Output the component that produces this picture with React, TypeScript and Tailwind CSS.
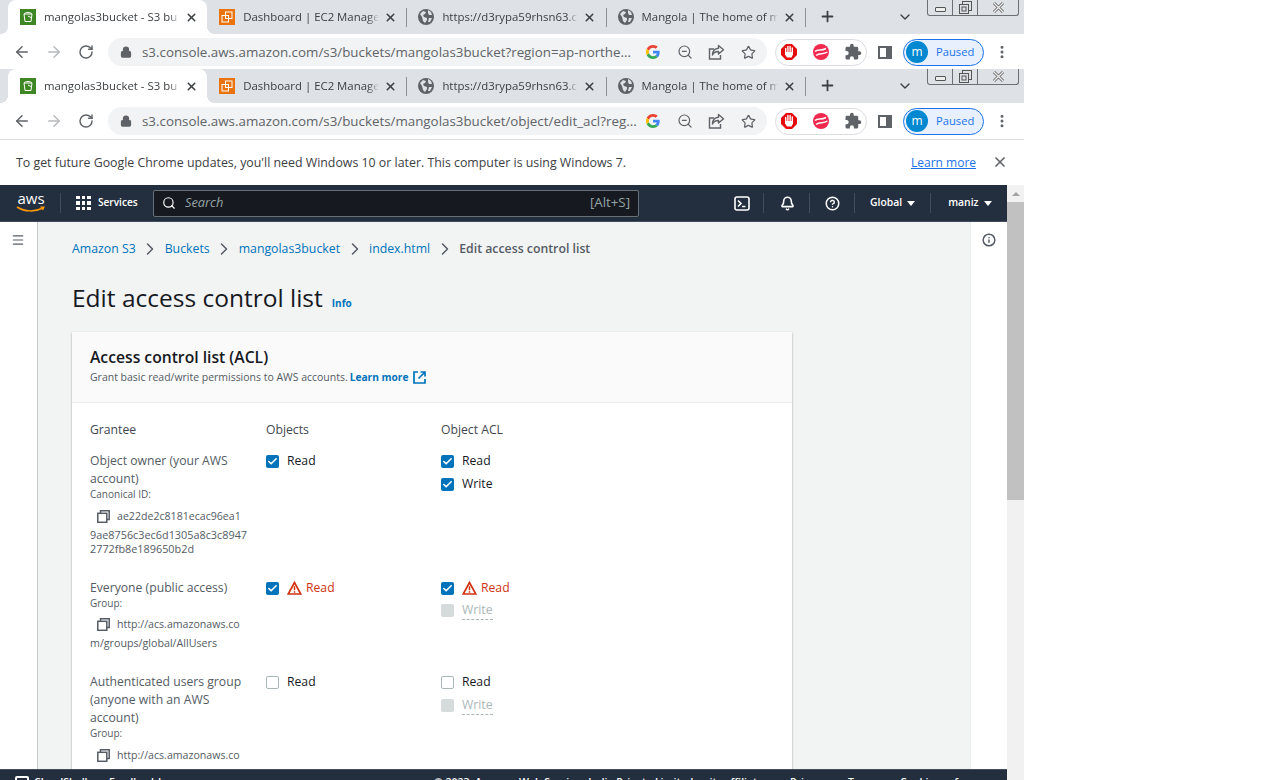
import React from "react";
import { MdExtension } from "react-icons/md";
import { ArrowLeft, ArrowRight, RotateCw, Lock, Star, MoreVertical, X, Plus, ChevronDown, ChevronRight, Menu, Info, Check, Bell, CircleHelp, Search, ZoomOut } from "lucide-react";

const Globe = () => (
  <svg width="16" height="16" viewBox="0 0 16 16" className="shrink-0">
    <circle cx="8" cy="8" r="8" fill="#5f6368" />
    <path d="M2 5l3-3 3 1-1 2-2 1 1 2 3 1 0 2-2 3-2-2-1-4zM10 1l3 2 1 3-3 0-1-2zM11 9l3 0-2 4-2 0z" fill="#dee1e6" />
  </svg>
);
const S3Icon = () => (
  <svg width="16" height="16" viewBox="0 0 16 16" className="shrink-0">
    <rect width="16" height="16" fill="#3f8624" />
    <path d="M4 5h8l-1 7.500H5zM4 5c1-2 7-2 8 0" fill="none" stroke="#fff" strokeWidth="1" />
    <path d="M8 7l4 2" stroke="#fff" strokeWidth="1" />
  </svg>
);
const Ec2Icon = () => (
  <svg width="16" height="16" viewBox="0 0 16 16" className="shrink-0">
    <rect width="16" height="16" fill="#e8730f" />
    <rect x="6.500" y="3" width="6.500" height="6.500" fill="none" stroke="#fff" strokeWidth="1" />
    <rect x="3" y="6.500" width="6.500" height="6.500" fill="none" stroke="#fff" strokeWidth="1" />
  </svg>
);
const GoogleG = () => (
  <svg width="14" height="14" viewBox="0 0 48 48" className="shrink-0">
    <path fill="#EA4335" d="M24 9.500c3.500 0 6.700 1.200 9.200 3.600l6.900-6.900C35.900 2.400 30.500 0 24 0 14.600 0 6.500 5.400 2.600 13.200l8 6.200C12.400 13.700 17.700 9.500 24 9.500z" />
    <path fill="#4285F4" d="M46.900 24.500c0-1.600-.1-3.100-.4-4.500H24v9h12.900c-.6 3-2.200 5.500-4.800 7.200l7.700 6c4.500-4.200 7.100-10.300 7.100-17.700z" />
    <path fill="#FBBC05" d="M10.500 28.600c-.5-1.400-.8-3-.8-4.600s.3-3.200.8-4.600l-8-6.200C.9 16.500 0 20.100 0 24s.9 7.500 2.600 10.800l7.900-6.200z" />
    <path fill="#34A853" d="M24 48c6.500 0 11.900-2.100 15.900-5.800l-7.700-6c-2.100 1.400-4.900 2.300-8.200 2.300-6.300 0-11.600-4.200-13.500-9.900l-8 6.200C6.500 42.600 14.600 48 24 48z" />
  </svg>
);
const Abp = () => (
  <svg width="16" height="16" viewBox="0 0 16 16" className="shrink-0">
    <path d="M5 0h6l5 5v6l-5 5H5l-5-5V5z" fill="#e40c0c" />
    <path d="M4.700 4.500v5M6.900 2.500v5M9.100 2.500v5M11.300 4v5" stroke="#fff" strokeWidth="1.400" strokeLinecap="round" />
    <path d="M4 8h8v2.500L10.500 13.500H6L4 10.500z" fill="#fff" />
  </svg>
);
const RedCircle = () => (
  <svg width="16" height="16" viewBox="0 0 16 16" className="shrink-0">
    <circle cx="8" cy="8" r="8" fill="#f0294f" />
    <path d="M2 7.500C5 4.500 8 7.500 13 4.500M3 11.500C7 8.500 10 11 14.500 8" fill="none" stroke="#fff" strokeWidth="1.500" />
  </svg>
);
const ShareIcon = () => (
  <svg width="17" height="16" viewBox="0 0 17 16" className="shrink-0" fill="none" stroke="#5f6368" strokeWidth="1.400">
    <path d="M6 5H1.500v10h11v-4" />
    <path d="M10.500 1.500l5 4.300-5 4.200V7.500C7.500 7.500 5.500 8.500 4.500 11c0-4 2.500-6.500 6-6.800z" strokeLinejoin="round" />
  </svg>
);
const CopyIcon = () => (
  <svg width="13" height="13" viewBox="0 0 13 13" className="shrink-0" fill="none" stroke="#545b64" strokeWidth="1.500">
    <path d="M3.500 3V0.800h8.700v8.700H10" />
    <rect x="0.800" y="3.300" width="9" height="9" />
  </svg>
);
const ExtIcon = () => (
  <svg width="13" height="13" viewBox="0 0 13 13" className="ml-[4px] shrink-0" fill="none" stroke="#0073bb" strokeWidth="1.700">
    <path d="M5 1H1v11h11V8M7.500 1H12v4.500M12 1L5.500 7.500" />
  </svg>
);
const WarnIcon = () => (
  <svg width="15" height="14" viewBox="0 0 15 14" className="ml-[8px] shrink-0" fill="none">
    <path d="M7.500 1.500L1.200 13h12.600z" stroke="#d13212" strokeWidth="1.700" strokeLinejoin="miter" />
    <path d="M7.500 5.200v4M7.500 10.200v1.600" stroke="#d13212" strokeWidth="1.500" />
  </svg>
);
const TermIcon = () => (
  <svg width="16" height="15" viewBox="0 0 16 15" className="ml-[95px] shrink-0" fill="none" stroke="#fff" strokeWidth="1.600">
    <rect x="1" y="1" width="14" height="13" rx="2" />
    <path d="M4 4.500l3 3-3 3M8 10.500h3.500" />
  </svg>
);
const AwsLogo = () => (
  <div className="relative w-[30px] h-[20px] shrink-0">
    <span className="absolute left-0 -top-[5px] w-full text-center text-white text-[15px] leading-[20px] [font-family:'Open_Sans',sans-serif]">aws</span>
    <svg width="30" height="8" viewBox="0 0 30 8" className="absolute left-0 top-[13px]">
      <path d="M1 1c8 5 18 5 26 1" fill="none" stroke="#ff9900" strokeWidth="1.500" />
      <path d="M24 0.500l5 0-2 4z" fill="#ff9900" />
    </svg>
  </div>
);

const TABS = [
  { title: "mangolas3bucket - S3 bu", icon: <S3Icon />, active: true },
  { title: "Dashboard | EC2 Manage", icon: <Ec2Icon /> },
  { title: "https://d3rypa59rhsn63.cl", icon: <Globe /> },
  { title: "Mangola | The home of m", icon: <Globe /> },
];

function Chrome({ url, last }: { url: string; last?: boolean }) {
  return (
    <div className="relative [font-family:'Open_Sans',sans-serif]">
      <div className="h-[34px] bg-[#dee1e6] flex items-start pl-2">
        {TABS.map((t, i) => (
          <div key={i} className={`relative w-[199.200px] h-[34px] flex items-center pl-3 shrink-0 ${t.active ? "bg-white rounded-t-lg" : ""}`}>
            {t.active && <span className="absolute -left-2 bottom-0 w-2 h-2 bg-[radial-gradient(circle_at_0_0,transparent_8px,white_8px)]" />}
            {t.active && <span className="absolute -right-2 bottom-0 w-2 h-2 bg-[radial-gradient(circle_at_100%_0,transparent_8px,white_8px)]" />}
            {t.icon}
            <span className="ml-2 w-[136px] whitespace-nowrap text-[11.400px] text-[#3c4043] [mask-image:linear-gradient(to_right,black_92%,transparent)]">{t.title}</span>
            <X size={13} strokeWidth={2.800} className="ml-[5px] text-[#3c4043] shrink-0" />
            {i > 0 && <span className="absolute -right-px top-2 h-[19px] w-px bg-[#8e9095]" />}
          </div>
        ))}
        <Plus size={17} strokeWidth={2.500} className="ml-[14px] mt-2 text-[#3c4043] shrink-0" />
        <ChevronDown size={16} strokeWidth={2} className="ml-[61px] mt-[9px] text-[#3c4043] shrink-0" />
      </div>
      <div className="absolute left-[927px] top-0 w-[92px] h-[16px] border border-t-0 border-[#6c7075] rounded-b-[3px] flex bg-[#dee1e6]">
        <div className="w-[25px] border-r border-[#6c7075] flex items-center justify-center"><span className="w-[11px] h-[5px] border border-[#555] rounded-[1px] bg-[#eee] mt-1" /></div>
        <div className="w-[25px] border-r border-[#6c7075] flex items-center justify-center">
          <svg width="13" height="13" viewBox="0 0 13 13"><rect x="3.500" y="0.500" width="9" height="9" fill="none" stroke="#555" /><rect x="0.500" y="3.500" width="9" height="9" fill="#dee1e6" stroke="#555" /><rect x="3" y="6" width="4" height="4" fill="none" stroke="#555" /></svg>
        </div>
        <div className="flex-1 flex items-center justify-center">
          <svg width="15" height="13" viewBox="0 0 15 13"><path d="M3 2l9 9M12 2l-9 9" stroke="#666" strokeWidth="3" /><path d="M3 2l9 9M12 2l-9 9" stroke="#eee" strokeWidth="1.300" /></svg>
        </div>
      </div>
      <div className={`bg-white flex items-center pl-[13px] ${last ? "h-[36px]" : "h-[35px] pt-px"}`}>
        <ArrowLeft size={18} strokeWidth={2} className="text-[#5f6368] shrink-0" />
        <ArrowRight size={18} strokeWidth={2} className="ml-[14px] text-[#b8babd] shrink-0" />
        <RotateCw size={16} strokeWidth={2.200} className="ml-[15px] text-[#5f6368] shrink-0" />
        <div className="ml-[14px] w-[659px] h-[28px] rounded-full bg-[#f1f3f4] flex items-center pl-[12px] shrink-0">
          <Lock size={12} strokeWidth={2.500} fill="#5f6368" className="text-[#5f6368] shrink-0" />
          <span className="ml-[10px] w-[500px] text-[13.350px] whitespace-nowrap text-[#5f6368]">{url}</span>
          <span className="ml-[4px]"><GoogleG /></span>
          <ZoomOut size={16} strokeWidth={1.800} className="ml-[17px] text-[#5f6368] shrink-0" />
          <span className="ml-[15px]"><ShareIcon /></span>
          <Star size={15} strokeWidth={2} className="ml-[16px] text-[#5f6368] shrink-0" />
        </div>
        <div className="ml-2 w-[92px] h-[27px] rounded-full border border-[#dadce0] flex items-center pl-[5px] shrink-0">
          <Abp />
          <span className="ml-4"><RedCircle /></span>
          <MdExtension size={18} className="ml-[15px] text-[#5f6368]" />
        </div>
        <span className="ml-[11px] w-[14px] h-[13px] border-2 border-[#5f6368] flex justify-end shrink-0"><span className="w-1 h-full bg-[#5f6368]" /></span>
        <div className="ml-[11px] w-[81px] h-[27px] rounded-full border border-[#1a73e8] bg-[#e8f0fe] flex items-center pl-[2px] shrink-0">
          <span className="w-[22px] h-[22px] rounded-full bg-[#0288d1] text-white text-xs flex items-center justify-center">m</span>
          <span className="ml-[8px] text-[11.200px] text-[#1a73e8]">Paused</span>
        </div>
        <MoreVertical size={16} strokeWidth={2.500} className="ml-[10px] text-[#5f6368] shrink-0" />
      </div>
    </div>
  );
}

const Box = ({ state }: { state: "on" | "off" | "dis" }) =>
  state === "on" ? (
    <span className="w-[13px] h-[13px] rounded-[2px] bg-[#0073bb] flex items-center justify-center shrink-0"><Check size={11} strokeWidth={3.500} className="text-white" /></span>
  ) : state === "off" ? (
    <span className="w-[13px] h-[13px] rounded-[2px] bg-white border border-[#aab7b8] shrink-0" />
  ) : (
    <span className="w-[13px] h-[13px] rounded-[2px] bg-[#d5dbdb] shrink-0" />
  );

const Opt = ({ state, label, warn, cls = "" }: { state: "on" | "off" | "dis"; label: string; warn?: boolean; cls?: string }) => (
  <div className={`flex items-center h-[18px] ${cls}`}>
    <Box state={state} />
    {warn && <WarnIcon />}
    {warn ? (
      <span className="ml-[4px] text-[12.200px] leading-[18px] text-[#d13212]">{label}</span>
    ) : (
      <span className={`ml-[8px] text-[12.200px] leading-[18px] ${state === "dis" ? "text-[#aab7b8] border-b border-dashed border-[#aab7b8]" : "text-[#16191f]"}`}>{label}</span>
    )}
  </div>
);

const CopyLine = ({ text }: { text: string }) => (
  <div className="flex items-center h-[17px] pl-[7px]">
    <CopyIcon />
    <span className="ml-[7px] text-[10.600px] text-[#545b64] whitespace-nowrap">{text}</span>
  </div>
);

const Crumb = ({ children }: { children: React.ReactNode }) => <span className="text-[#0073bb]">{children}</span>;
const Sep = () => <ChevronRight size={20} strokeWidth={1.800} className="text-[#545b64] mx-[4.500px] shrink-0" />;
const NavSep = ({ cls }: { cls: string }) => <span className={`w-px h-[20px] bg-[#414d5c] shrink-0 ${cls}`} />;
const Caret = () => <span className="w-0 h-0 border-x-[4px] border-x-transparent border-t-[5px] border-t-white ml-[5px] shrink-0" />;

export default function App() {
  return (
    <div className="relative w-[1268px] h-[780px] bg-white overflow-hidden">
      <div className="w-[1024px] h-full flex flex-col">
        <Chrome url="s3.console.aws.amazon.com/s3/buckets/mangolas3bucket?region=ap-northe..." />
        <Chrome last url="s3.console.aws.amazon.com/s3/buckets/mangolas3bucket/object/edit_acl?reg..." />
        <div className="h-[1px] bg-[#dadce0]" />
        <div className="h-[45px] flex items-center pl-[16px] [font-family:'Open_Sans',sans-serif] text-[#3c4043] shrink-0">
          <span className="w-[895px] pt-px text-[12.370px]">To get future Google Chrome updates, you'll need Windows 10 or later. This computer is using Windows 7.</span>
          <span className="text-xs text-[#1a73e8] underline">Learn more</span>
          <X size={16} strokeWidth={2.500} className="ml-[16px] -mt-px text-[#5f6368]" />
        </div>
        <div className="flex-1 flex min-h-0">
          <div className="w-[1007px] flex flex-col [font-family:'Open_Sans',sans-serif]">
            <div className="h-[37px] bg-[#232f3e] flex items-center pl-4 shrink-0 text-white border-b border-[#414d5c]">
              <AwsLogo />
              <NavSep cls="ml-[14px]" />
              <div className="ml-[15px] grid grid-cols-3 gap-[2px] w-[15px] shrink-0">
                {Array.from({ length: 9 }).map((_, i) => <span key={i} className="w-[3.600px] h-[3.600px] bg-white" />)}
              </div>
              <span className="ml-[7px] text-[10.100px] font-semibold w-[47px]">Services</span>
              <div className="ml-[8px] w-[486px] h-[27px] bg-[#16191f] border border-[#687078] rounded-[2px] flex items-center pl-2 pr-2 shrink-0">
                <Search size={14} strokeWidth={2} className="text-white" />
                <span className="ml-[9px] text-[12.800px] italic text-[#95a5a6]">Search</span>
                <span className="ml-auto text-[13.300px] text-[#95a5a6]">[Alt+S]</span>
              </div>
              <TermIcon />
              <NavSep cls="ml-[13px]" />
              <Bell size={15} strokeWidth={2.500} className="ml-[16px] shrink-0" />
              <NavSep cls="ml-[14px]" />
              <CircleHelp size={15} strokeWidth={2.400} className="ml-[15px] shrink-0" />
              <NavSep cls="ml-[14px]" />
              <span className="ml-[15px] text-[10.400px] font-semibold">Global</span>
              <Caret />
              <NavSep cls="ml-[15px]" />
              <span className="ml-[17px] text-[10.400px] font-semibold">maniz</span>
              <Caret />
            </div>
            <div className="flex-1 flex min-h-0">
              <div className="w-[38px] bg-white border-r border-[#c4cccc] pt-[11px] pl-[11px] shrink-0">
                <Menu size={14} strokeWidth={2} className="text-[#545b64]" />
              </div>
              <div className="flex-1 min-w-0 bg-[#f2f3f3] pl-[34px] overflow-hidden">
                <div className="h-[18px] mt-[18px] flex items-center text-[12.300px] text-[#545b64]">
                  <Crumb>Amazon S3</Crumb><Sep />
                  <Crumb>Buckets</Crumb><Sep />
                  <Crumb>mangolas3bucket</Crumb><Sep />
                  <Crumb>index.html</Crumb><Sep />
                  <span className="font-semibold">Edit access control list</span>
                </div>
                <div className="mt-[22px] h-[36px] flex items-end">
                  <h1 className="text-[24.500px] leading-[36px] text-[#16191f]">Edit access control list</h1>
                  <span className="ml-[9px] mb-[5px] text-[10px] font-bold text-[#0073bb]">Info</span>
                </div>
                <div className="mt-[16px] w-[720px] bg-white shadow-[0_1px_2px_rgba(0,28,36,0.4)]">
                  <div className="h-[71px] bg-[#fafafa] border-b border-[#eaeded] pl-[18px] pt-[14px]">
                    <h2 className="text-[15.700px] leading-[22px] font-semibold text-[#16191f]">Access control list (ACL)</h2>
                    <p className="flex items-center text-[10.480px] leading-[18px] text-[#545b64]">
                      Grant basic read/write permissions to AWS accounts.
                      <span className="ml-[2px] text-[10.200px] font-bold text-[#0073bb]">Learn more</span>
                      <ExtIcon />
                    </p>
                  </div>
                  <div className="pl-[18px] pt-[18px] pb-[40px] text-[12.200px] text-[#545b64] grid grid-cols-[176px_175px_1fr]">
                    <div className="h-[22px] leading-[18px] text-[#414750]">Grantee</div>
                    <div className="h-[22px] leading-[18px] text-[#414750]">Objects</div>
                    <div className="h-[22px] leading-[18px] text-[#414750]">Object ACL</div>

                    <div className="mt-[9px] w-[160px] h-[127px]">
                      <div className="leading-[18px]">Object owner (your AWS account)</div>
                      <div className="text-[10px] leading-[14px] -mt-px mb-[7px]">Canonical ID:</div>
                      <CopyLine text="ae22de2c8181ecac96ea1" />
                      <div className="text-[10.850px] leading-[14px] mt-[3px] text-[#545b64] whitespace-nowrap">9ae8756c3ec6d1305a8c3c8947<br />2772fb8e189650b2d</div>
                    </div>
                    <div className="mt-[9px]"><Opt state="on" label="Read" /></div>
                    <div className="mt-[9px]"><Opt state="on" label="Read" /><Opt state="on" label="Write" cls="mt-[5px]" /></div>

                    <div className="w-[160px] h-[94px]">
                      <div className="leading-[18px]">Everyone (public access)</div>
                      <div className="text-[10px] leading-[14px] -mt-px mb-[6px]">Group:</div>
                      <CopyLine text="http://acs.amazonaws.co" />
                      <div className="text-[10.700px] leading-[14.500px] mt-[3px]">m/groups/global/AllUsers</div>
                    </div>
                    <div><Opt state="on" label="Read" warn /></div>
                    <div><Opt state="on" label="Read" warn /><Opt state="dis" label="Write" cls="mt-[4px]" /></div>

                    <div className="w-[160px]">
                      <div className="leading-[18px]">Authenticated users group (anyone with an AWS account)</div>
                      <div className="text-[10px] leading-[14px] -mt-px mb-[7px]">Group:</div>
                      <CopyLine text="http://acs.amazonaws.co" />
                    </div>
                    <div><Opt state="off" label="Read" /></div>
                    <div><Opt state="off" label="Read" /><Opt state="dis" label="Write" cls="mt-[5px]" /></div>
                  </div>
                </div>
              </div>
              <div className="w-[37px] bg-white border-l border-[#eaeded] pt-[11px] pl-[11px] shrink-0">
                <Info size={14} strokeWidth={2.500} className="text-[#545b64]" />
              </div>
            </div>
          </div>
          <div className="w-[17px] bg-[#f1f1f1] flex flex-col shrink-0">
            <div className="h-[17px] flex items-center justify-center"><span className="w-0 h-0 border-x-[4px] border-x-transparent border-b-[4px] border-b-[#a3a3a3]" /></div>
            <div className="h-[298px] bg-[#c1c1c1]" />
          </div>
        </div>
      </div>
      <div className="absolute left-0 top-[769px] w-[1007px] h-[11px] bg-[#232f3e] border-t border-[#414d5c] overflow-hidden text-white text-[10.500px] font-semibold [font-family:'Open_Sans',sans-serif] leading-[16px] pl-[15px]">
        <span className="absolute left-[15px] top-[6px] w-[14px] h-[14px] rounded-[2px] border-2 border-white" />
        <span className="absolute left-[34px] top-[4px]">CloudShell</span>
        <span className="absolute left-[109px] top-[4px]">Feedback</span>
        <span className="absolute left-[158px] top-[4px]">Language</span>
        <span className="absolute left-[434px] top-[4px] whitespace-nowrap">© 2023, Amazon Web Services India Private Limited or its affiliates.</span>
        <span className="absolute left-[790px] top-[4px]">Privacy</span>
        <span className="absolute left-[848px] top-[4px]">Terms</span>
        <span className="absolute left-[900px] top-[4px]">Cookie preferences</span>
      </div>
    </div>
  );
}
